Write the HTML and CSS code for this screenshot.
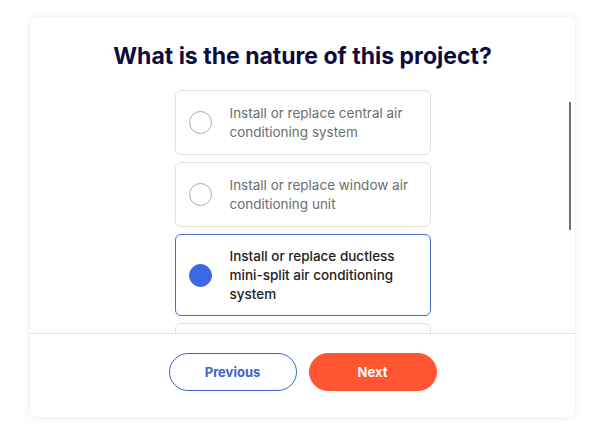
FILE: index.html
```html
<!DOCTYPE html>
<html lang="en">
<head>
<meta charset="utf-8">
<title>Project</title>
<link rel="stylesheet" href="styles.css">
</head>
<body>
<div class="card">
  <div class="body">
    <h1 class="title">What is the nature of this project?</h1>
    <div class="options">
      <div class="option">
        <span class="radio"></span>
        <span class="label">Install or replace central air conditioning system</span>
      </div>
      <div class="option">
        <span class="radio"></span>
        <span class="label">Install or replace window air conditioning unit</span>
      </div>
      <div class="option selected">
        <span class="radio"></span>
        <span class="label">Install or replace ductless mini-split air conditioning system</span>
      </div>
      <div class="option">
        <span class="radio"></span>
      </div>
    </div>
    <div class="thumb"></div>
  </div>
  <div class="footer">
    <button class="btn btn-prev">Previous</button>
    <button class="btn btn-next">Next</button>
  </div>
</div>
</body>
</html>
```
FILE: styles.css
```css
html, body {
  margin: 0;
  padding: 0;
  background: #ffffff;
}
body {
  font-family: "Inter", "Liberation Sans", sans-serif;
  width: 603px;
  height: 435px;
  overflow: hidden;
}
.card {
  margin: 17px 0 0 30px;
  width: 545px;
  height: 400px;
  border-radius: 7px;
  background: #fff;
  box-shadow: 0 0 8px rgba(0, 0, 0, 0.09);
  display: flex;
  flex-direction: column;
  overflow: hidden;
}
.body {
  position: relative;
  height: 316px;
  overflow: hidden;
  display: flex;
  flex-direction: column;
  align-items: center;
}
.title {
  margin: 25px 0 0 0;
  font-size: 23px;
  line-height: 28px;
  font-weight: 700;
  color: #0d0b3b;
  letter-spacing: 0;
}
.options {
  margin-top: 20px;
  width: 256px;
  display: flex;
  flex-direction: column;
  gap: 7px;
}
.option {
  box-sizing: border-box;
  min-height: 65px;
  border: 1px solid #e1e1e1;
  border-radius: 6px;
  padding: 11.5px 10px 11.5px 13px;
  display: flex;
  align-items: center;
  gap: 18px;
}
.radio {
  flex: none;
  box-sizing: border-box;
  width: 23px;
  height: 23px;
  border: 1px solid #a9a9a9;
  border-radius: 50%;
}
.label {
  font-size: 13.5px;
  line-height: 19px;
  color: #6e6e6e;
}
.option.selected {
  border-color: #4a6cc9;
}
.option.selected .radio {
  background: #3b68e4;
  border-color: #3b68e4;
}
.option.selected .label {
  color: #222222;
  font-weight: 500;
}
.thumb {
  position: absolute;
  left: 539px;
  top: 85px;
  width: 2px;
  height: 128px;
  background: #6c747c;
}
.footer {
  flex: 1;
  border-top: 1px solid #e0e0e0;
  display: flex;
  justify-content: center;
  align-items: flex-start;
  gap: 12px;
  padding-top: 19px;
}
.btn {
  box-sizing: border-box;
  width: 128px;
  height: 38px;
  border-radius: 19px;
  font-family: inherit;
  font-size: 13px;
  font-weight: 700;
  cursor: pointer;
}
.btn-prev {
  background: #fff;
  border: 1px solid #3f64c8;
  color: #3f64c8;
}
.btn-next {
  background: #ff5530;
  border: 1px solid #ff5530;
  color: #fff;
}
```
